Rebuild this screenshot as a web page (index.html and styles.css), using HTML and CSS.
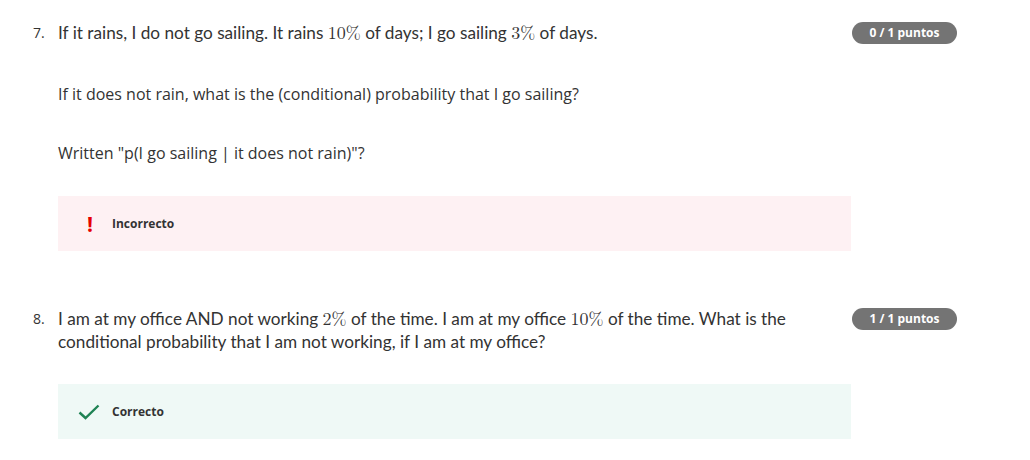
FILE: index.html
```html
<!DOCTYPE html>
<html>
<head>
<meta charset="utf-8">
<link rel="stylesheet" href="styles.css">
</head>
<body>
<div class="page">
  <div class="question q7">
    <div class="num">7.</div>
    <div class="content">
      <p class="prompt">If it rains, I do not go sailing. It rains <span class="math">10%</span> of days; I go sailing <span class="math">3%</span> of days.</p>
      <p class="para first">If it does not rain, what is the (conditional) probability that I go sailing?</p>
      <p class="para">Written "p(I go sailing | it does not rain)"?</p>
      <div class="feedback wrong">
        <span class="icon bang">!</span>
        <span class="label">Incorrecto</span>
      </div>
    </div>
    <div class="score"><span class="badge">0 / 1 puntos</span></div>
  </div>
  <div class="question q8">
    <div class="num">8.</div>
    <div class="content">
      <p class="prompt">I am at my office AND not working <span class="math">2%</span> of the time. I am at my office <span class="math">10%</span> of the time. What is the conditional probability that I am not working, if I am at my office?</p>
      <div class="feedback right">
        <svg class="icon check" width="22" height="16" viewBox="0 0 22 16"><path d="M1.5 8.5 L7.5 14 L20.5 1.5" fill="none" stroke="#1f8354" stroke-width="2.4"/></svg>
        <span class="label">Correcto</span>
      </div>
    </div>
    <div class="score"><span class="badge">1 / 1 puntos</span></div>
  </div>
</div>
</body>
</html>
```

FILE: styles.css
```css
html, body {
  margin: 0;
  padding: 0;
  background: #fff;
}
body {
  font-family: "Open Sans", sans-serif;
  color: #333;
}
.page {
  padding: 21px 0 0 0;
}
.question {
  display: flex;
  align-items: flex-start;
}
.q8 {
  margin-top: 56px;
}
.num {
  width: 25px;
  margin-left: 33px;
  font-size: 14px;
  line-height: 24px;
  color: #333;
}
.content {
  width: 793px;
}
.prompt {
  margin: 0;
  font-family: "Lato", sans-serif;
  font-size: 17.2px;
  line-height: 23px;
  color: #333;
}
.math {
  font-family: "Latin Modern Roman", "DejaVu Serif", serif;
  font-size: 18px;
  line-height: 20px;
}
.para {
  margin: 35px 0 0 0;
  font-size: 16px;
  line-height: 24px;
  color: #333;
}
.para.first {
  margin-top: 38px;
}
.feedback {
  display: flex;
  align-items: center;
  height: 55px;
  padding-left: 20px;
  box-sizing: border-box;
}
.wrong {
  background: #fef1f3;
  margin-top: 31px;
}
.right {
  background: #eff9f6;
  margin-top: 31px;
}
.icon {
  width: 34px;
  flex: none;
}
.bang {
  color: #e60000;
  font-weight: 700;
  font-size: 21px;
  line-height: 20px;
  padding-left: 9px;
  width: 25px;
  font-family: "Open Sans", sans-serif;
}
.check {
  width: 22px;
  margin-right: 12px;
}
.label {
  font-size: 12px;
  font-weight: 700;
  color: #333;
}
.score {
  width: 105px;
  margin-left: 1px;
  padding-top: 1px;
}
.badge {
  display: block;
  height: 22px;
  line-height: 22px;
  border-radius: 11px;
  background: #747474;
  color: #fff;
  font-size: 12px;
  font-weight: 700;
  text-align: center;
}
```
